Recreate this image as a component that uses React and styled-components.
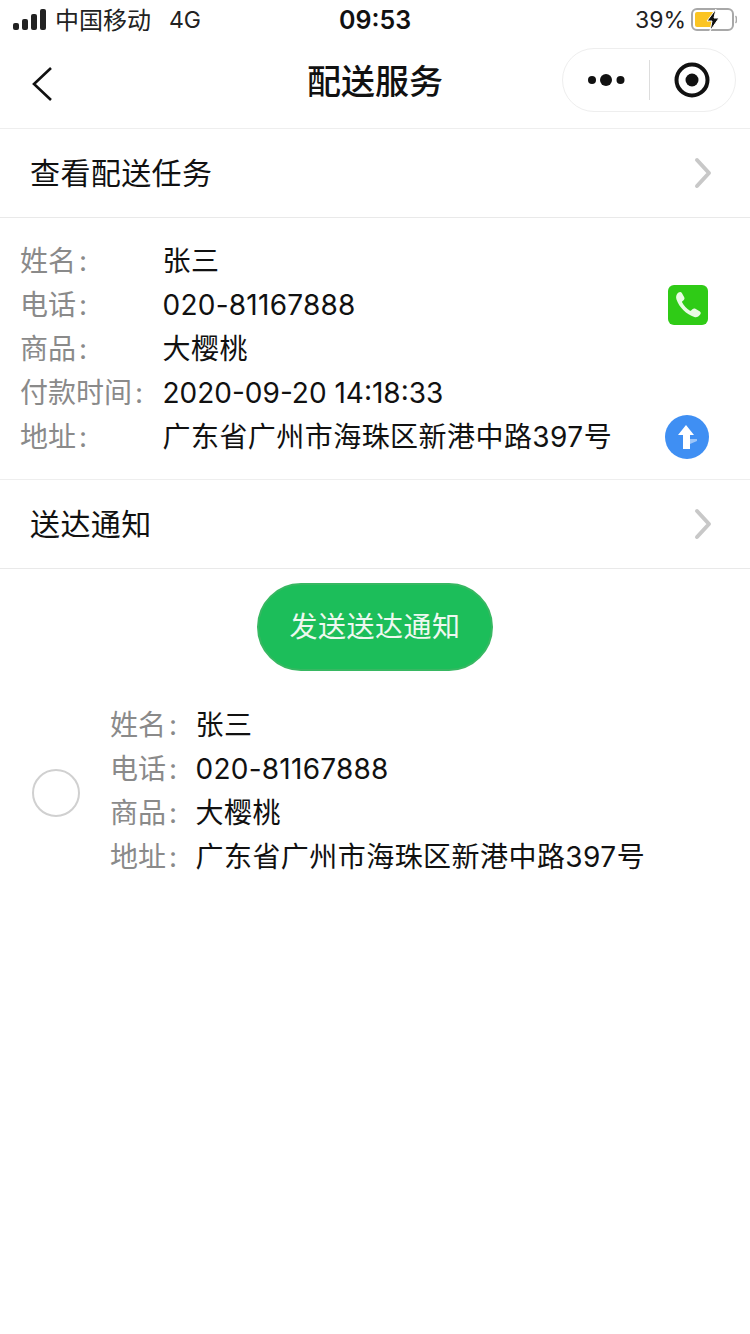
import styled, { createGlobalStyle } from "styled-components";

const GlobalStyle = createGlobalStyle`
  html, body {
    margin: 0;
    padding: 0;
    background: #fff;
  }
  body {
    font-family: Inter, "Noto Sans CJK SC", sans-serif;
    color: #111;
  }
`;

const Page = styled.div`
  width: 750px;
  height: 1334px;
  overflow: hidden;
  background: #fff;
`;

const StatusBar = styled.div`
  height: 40px;
  display: grid;
  grid-template-columns: 1fr auto 1fr;
  align-items: center;
  padding: 0 13px;
  font-size: 23px;
  color: #222;
`;

const StatusLeft = styled.div`
  display: flex;
  align-items: center;
  gap: 9px;
`;

const Carrier = styled.span`
  font-size: 24px;
  margin-right: 9px;
  padding-bottom: 3px;
`;

const Clock = styled.span`
  font-size: 25px;
  font-weight: 600;
  color: #111;
`;

const StatusRight = styled.div`
  display: flex;
  justify-content: flex-end;
  align-items: center;
  gap: 5px;
`;

const NavBar = styled.div`
  height: 89px;
  display: grid;
  grid-template-columns: 1fr auto 1fr;
  align-items: center;
  padding: 0 14px 8px;
  border-bottom: 1px solid #eee;
  box-sizing: border-box;
`;

const Title = styled.div`
  font-size: 34px;
  font-weight: 500;
  color: #111;
  padding-bottom: 2px;
`;

const BackSlot = styled.div`
  display: flex;
  padding: 8px 0 0 17px;
`;

const Capsule = styled.div`
  justify-self: end;
  width: 174px;
  height: 64px;
  box-sizing: border-box;
  border: 1px solid #eee;
  border-radius: 32px;
  display: flex;
  align-items: center;
  justify-content: space-between;
  padding: 0 25px 0 24px;
`;

const CapsuleDivider = styled.div`
  width: 1px;
  height: 40px;
  background: #ddd;
`;

const LinkRow = styled.div`
  height: 89px;
  box-sizing: border-box;
  display: flex;
  align-items: center;
  justify-content: space-between;
  padding: 0 38px 0 30px;
  border-bottom: 1px solid #e9e9e9;
  font-size: 30px;
  color: #111;
`;

const LinkText = styled.span`
  letter-spacing: 0.4px;
  padding-bottom: 5px;
`;

const InfoBlock = styled.div`
  padding: 21px 42px 20px 20px;
  border-bottom: 1px solid #eee;
`;

const InfoRow = styled.div`
  height: 44px;
  display: flex;
  align-items: center;
  font-size: 28px;
`;

const Label = styled.span`
  width: ${(props) => props.$width}px;
  flex: none;
  color: #8a8a8a;
  white-space: nowrap;
  padding-bottom: 4px;
`;

const Colon = styled.span`
  margin-left: 3px;
`;

const Value = styled.span`
  flex: 1;
  color: #111;
  white-space: nowrap;
  letter-spacing: ${(props) => props.$spacing ?? 0.45}px;
  padding-bottom: ${(props) => (props.$spacing === undefined ? "4px" : "0")};
`;

const PhoneButton = styled.div`
  width: 40px;
  height: 40px;
  border-radius: 6px;
  background: #2fcb16;
  display: flex;
  align-items: center;
  justify-content: center;
`;

const NavigateButton = styled.div`
  width: 44px;
  height: 44px;
  margin-right: -1px;
  border-radius: 50%;
  background: #3f8ff3;
  display: flex;
  align-items: center;
  justify-content: center;
`;

const ButtonWrap = styled.div`
  display: flex;
  justify-content: center;
  padding: 14px 0 32px;
`;

const SendButton = styled.div`
  width: 236px;
  height: 88px;
  box-sizing: border-box;
  border: 2px solid #37b862;
  border-radius: 44px;
  padding-bottom: 4px;
  background: #1cbe5a;
  color: #eef8f0;
  font-size: 28px;
  letter-spacing: 0.5px;
  display: flex;
  align-items: center;
  justify-content: center;
`;

const OrderItem = styled.div`
  display: flex;
  align-items: center;
  padding-left: 32px;
`;

const Radio = styled.div`
  width: 48px;
  height: 48px;
  box-sizing: border-box;
  border: 2px solid #d0d0d0;
  border-radius: 50%;
  flex: none;
  margin: 4px 30px 0 0;
`;

const OrderFields = styled.div`
  flex: 1;
`;

const Chevron = () => (
  <svg width="20" height="32" viewBox="0 0 20 32" fill="none">
    <path d="M5 3L17 16L5 29" stroke="#c8c8c8" strokeWidth="4" strokeLinecap="round" strokeLinejoin="round" />
  </svg>
);

const Signal = () => (
  <svg width="33" height="22" viewBox="0 0 33 22" fill="#222">
    <rect x="0" y="14" width="6" height="7" rx="2" />
    <rect x="9" y="10" width="6" height="11" rx="2" />
    <rect x="18" y="5" width="6" height="16" rx="2" />
    <rect x="27" y="0" width="6" height="21" rx="2" />
  </svg>
);

const Battery = () => (
  <svg width="46" height="24" viewBox="0 0 46 24" fill="none">
    <rect x="1" y="1" width="41" height="21" rx="5" stroke="#a8a8a8" strokeWidth="2" />
    <rect x="4" y="4" width="19" height="15" rx="2" fill="#fbc422" />
    <path d="M25 1L16 13H21L19 23L28 10H23L25 1Z" fill="#111" stroke="#fff" strokeWidth="1" />
    <path d="M44.5 8C45.8 9 45.8 14 44.5 15" stroke="#a8a8a8" strokeWidth="1.5" />
  </svg>
);

const BackArrow = () => (
  <svg width="24" height="36" viewBox="0 0 24 36" fill="none">
    <path d="M20 2L3 18L20 34" stroke="#111" strokeWidth="2.6" />
  </svg>
);

const Dots = () => (
  <svg width="38" height="14" viewBox="0 0 38 14" fill="#111">
    <circle cx="5" cy="7" r="4" />
    <circle cx="19" cy="7" r="6" />
    <circle cx="33.5" cy="7" r="4" />
  </svg>
);

const Target = () => (
  <svg width="36" height="36" viewBox="0 0 36 36" fill="none">
    <circle cx="18" cy="18" r="15.5" stroke="#111" strokeWidth="4" />
    <circle cx="18" cy="18" r="6.5" fill="#111" />
  </svg>
);

const PhoneIcon = () => (
  <svg width="30" height="30" viewBox="0 0 30 30" fill="#e9fbe4">
    <path d="M5.5 2.5C7 1.6 8.3 1.9 9 3.2L11.2 7.3C11.8 8.4 11.5 9.4 10.6 10.2L9.3 11.3C9 11.6 9 12 9.2 12.4C10.8 15.6 13.6 18.7 17 20.7C17.4 20.9 17.8 20.9 18.1 20.6L19.4 19.3C20.3 18.4 21.3 18.2 22.4 18.8L26.6 21.2C27.9 22 28.1 23.2 27.2 24.6C25.8 26.7 23.6 27.7 21.3 27C13.6 24.7 6.2 17.5 3.4 9.3C2.6 6.6 3.4 4 5.5 2.5Z" />
  </svg>
);

const UpArrow = () => (
  <svg width="30" height="32" viewBox="0 0 30 32" fill="none">
    <path d="M14 4L22 14H18V28H11V14H6L14 4Z" fill="#fff" />
    <path d="M18 18H25V20L18 23Z" fill="#9cc5f8" />
  </svg>
);

const Field = ({ label, width, spacing, children }) => (
  <InfoRow>
    <Label $width={width}>
      {label}
      <Colon>:</Colon>
    </Label>
    <Value $spacing={spacing}>{children}</Value>
  </InfoRow>
);

export default function App() {
  return (
    <Page>
      <GlobalStyle />
      <StatusBar>
        <StatusLeft>
          <Signal />
          <Carrier>中国移动</Carrier>
          <span>4G</span>
        </StatusLeft>
        <Clock>09:53</Clock>
        <StatusRight>
          <span>39%</span>
          <Battery />
        </StatusRight>
      </StatusBar>
      <NavBar>
        <BackSlot>
          <BackArrow />
        </BackSlot>
        <Title>配送服务</Title>
        <Capsule>
          <Dots />
          <CapsuleDivider />
          <Target />
        </Capsule>
      </NavBar>
      <LinkRow>
        <LinkText>查看配送任务</LinkText>
        <Chevron />
      </LinkRow>
      <InfoBlock>
        <Field label="姓名" width={142.5}>张三</Field>
        <InfoRow>
          <Label $width={142.5}>电话<Colon>:</Colon></Label>
          <Value $spacing={0.25}>020-81167888</Value>
          <PhoneButton>
            <PhoneIcon />
          </PhoneButton>
        </InfoRow>
        <Field label="商品" width={142.5}>大樱桃</Field>
        <Field label="付款时间" width={142.5} spacing={0}>2020-09-20 14:18:33</Field>
        <InfoRow>
          <Label $width={142.5}>地址<Colon>:</Colon></Label>
          <Value>广东省广州市海珠区新港中路397号</Value>
          <NavigateButton>
            <UpArrow />
          </NavigateButton>
        </InfoRow>
      </InfoBlock>
      <LinkRow>
        <LinkText>送达通知</LinkText>
        <Chevron />
      </LinkRow>
      <ButtonWrap>
        <SendButton>发送送达通知</SendButton>
      </ButtonWrap>
      <OrderItem>
        <Radio />
        <OrderFields>
          <Field label="姓名" width={85.5}>张三</Field>
          <Field label="电话" width={85.5} spacing={0.25}>020-81167888</Field>
          <Field label="商品" width={85.5}>大樱桃</Field>
          <Field label="地址" width={85.5}>广东省广州市海珠区新港中路397号</Field>
        </OrderFields>
      </OrderItem>
    </Page>
  );
}
